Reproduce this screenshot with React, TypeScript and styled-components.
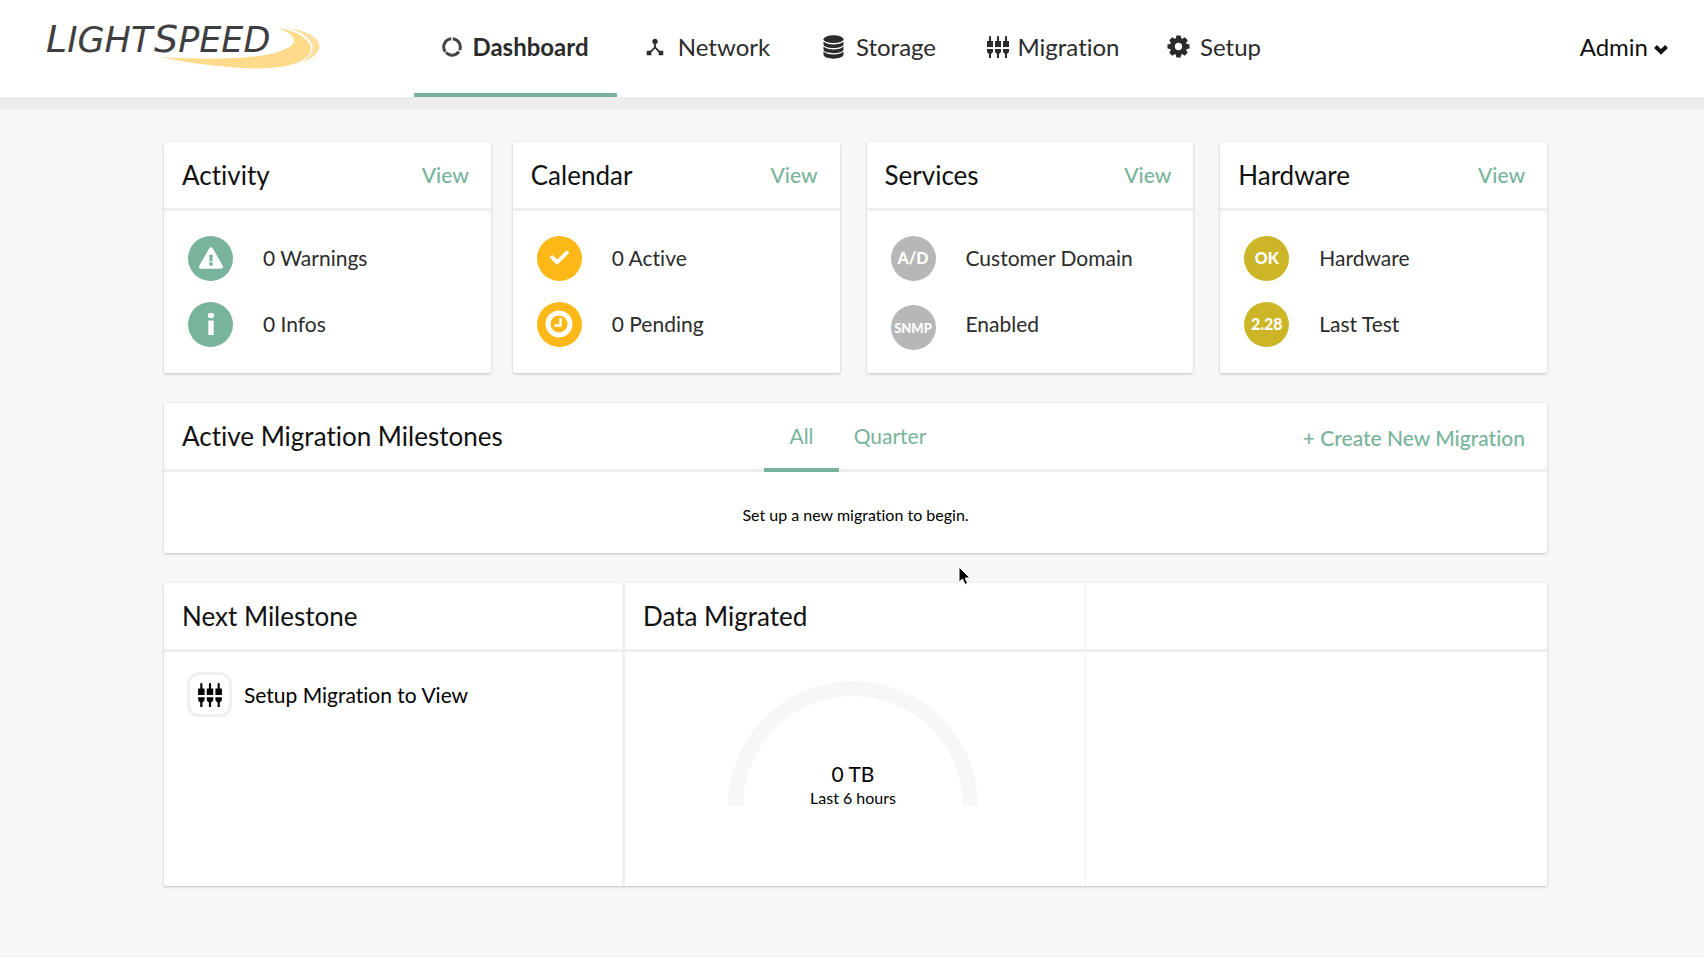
import React from 'react';
import styled, { createGlobalStyle } from 'styled-components';
import { MdDeviceHub, MdSettingsInputComponent } from 'react-icons/md';
import { FaExclamationTriangle, FaCheck } from 'react-icons/fa';

const green = '#78b39b';
const line = '#eeeeee';

const GlobalStyle = createGlobalStyle`
  * { box-sizing: border-box; }
  body {
    margin: 0;
    background: #fff;
    color: #111;
    font-family: Lato, "Open Sans", sans-serif;
    font-variant-ligatures: none;
  }
  h2, p, ul { margin: 0; padding: 0; }
  button { font: inherit; border: 0; background: none; padding: 0; cursor: pointer; }
  a { text-decoration: none; }
`;

const Page = styled.div`
  min-height: calc(100vh - 1px);
  background: #f7f7f7;
  border-bottom: 1px solid #ebebeb;
`;

const Header = styled.header`
  display: flex;
  align-items: stretch;
  height: 97px;
  padding: 0 36px 0 46px;
  background: #fff;
`;

const HeaderShade = styled.div`
  height: 13px;
  background: #ededed;
`;

const Brand = styled.a`
  display: block;
  width: 368px;
  padding-top: 10px;
`;

const Nav = styled.nav`
  display: flex;
  flex: 1;
`;

const NavLink = styled.a<{ $active?: boolean; $width: number; $gap: number }>`
  display: flex;
  align-items: center;
  justify-content: center;
  gap: ${(p) => p.$gap}px;
  width: ${(p) => p.$width}px;
  border-bottom: 4px solid ${(p) => (p.$active ? green : 'transparent')};
  color: #2b2b2b;
  font-size: 24px;
  line-height: 32px;
  font-weight: ${(p) => (p.$active ? 700 : 400)};
`;

const AdminButton = styled.button`
  display: flex;
  align-items: center;
  gap: 6px;
  padding-bottom: 4px;
  color: #111;
  font-size: 24px;
  line-height: 32px;

  svg { margin-top: 6px; }
`;

const Main = styled.main`
  display: flex;
  flex-direction: column;
  gap: 30px;
  padding: 32px 157px 68px 164px;
`;

const Panel = styled.section`
  background: #fff;
  border-radius: 2px;
  box-shadow: 0 1px 3px rgba(0, 0, 0, 0.22);
`;

const CardRow = styled.div`
  display: flex;
`;

const Card = styled(Panel)<{ $space: number }>`
  flex: 1;
  margin-left: ${(p) => p.$space}px;
`;

const PanelHead = styled.div`
  display: flex;
  align-items: center;
  justify-content: space-between;
  height: 69px;
  padding: 0 22px 0 18px;
  border-bottom: 3px solid ${line};
`;

const Title = styled.h2`
  font-size: 26px;
  line-height: 32px;
  font-weight: 400;
`;

const TextLink = styled.a`
  color: ${green};
  font-size: 21px;
  line-height: 28px;
  font-weight: 500;
`;

const StatusList = styled.ul`
  display: flex;
  flex-direction: column;
  gap: 15px;
  height: 162px;
  padding: 22px 24px;
  list-style: none;
`;

const StatusRow = styled.li`
  display: flex;
  align-items: center;
  gap: 30px;
  height: 51px;
  color: #2b2b2b;
  font-size: 21px;
  line-height: 28px;
`;

const StatusText = styled.span`
  padding-bottom: 1px;
`;

const Badge = styled.span<{ $color: string; $small?: boolean }>`
  display: flex;
  align-items: center;
  justify-content: center;
  align-self: ${(p) => (p.$small ? 'flex-end' : 'center')};
  flex: none;
  width: 45px;
  height: 45px;
  padding-bottom: ${(p) => (p.$small ? 0 : 2)}px;
  border-radius: 50%;
  background: ${(p) => p.$color};
  color: #fff;
  font-size: ${(p) => (p.$small ? 13 : 16)}px;
  line-height: 20px;
  font-weight: 900;
`;

const MilestoneHead = styled.div`
  display: grid;
  grid-template-columns: 600px 1fr auto;
  align-items: stretch;
  height: 69px;
  padding: 0 22px 0 0;
  box-shadow: inset 0 -3px ${line};

  h2 {
    align-self: center;
    padding: 0 0 4px 18px;
  }
  > a { align-self: center; }
`;

const Tabs = styled.div`
  display: flex;
`;

const Tab = styled.button<{ $active?: boolean; $width: number }>`
  width: ${(p) => p.$width}px;
  border-bottom: 4px solid ${(p) => (p.$active ? green : 'transparent')};
  color: ${green};
  font-size: 21px;
  line-height: 28px;
`;

const Message = styled.p`
  padding: 33px 0 28px;
  color: #000;
  text-align: center;
  font-size: 16px;
  line-height: 20px;
`;

const Summary = styled(Panel)`
  display: grid;
  grid-template-columns: repeat(3, 1fr);
  min-height: 303px;
`;

const SummaryColumn = styled.div<{ $divider?: string }>`
  border-right: ${(p) => p.$divider ?? '0'};
`;

const NextStep = styled.div`
  display: flex;
  align-items: center;
  gap: 12px;
  padding: 20px 23px;
  color: #000;
  font-size: 21px;
  line-height: 28px;
`;

const StepIcon = styled.span`
  display: flex;
  align-items: center;
  justify-content: center;
  width: 45px;
  height: 45px;
  border: 3px solid #f0eeee;
  border-radius: 12px;
`;

const Gauge = styled.div`
  display: grid;
  justify-items: center;
  padding: 29px 4px 0 0;
  color: #000;

  > * { grid-area: 1 / 1; }
`;

const GaugeLabel = styled.div`
  align-self: end;
  text-align: center;
`;

const GaugeValue = styled.p`
  font-size: 21px;
  line-height: 32px;
`;

const GaugeNote = styled.p`
  font-size: 16px;
  line-height: 16px;
`;

const Pointer = styled.svg`
  position: absolute;
  left: 958px;
  top: 566px;
`;

function Logo() {
  return (
    <svg width="280" height="64" viewBox="0 -10 280 64" role="img" aria-label="LightSpeed">
      <path d="M114 37C160 40 206 39 229 33C253 26 255 17 232 8C258 12 268 24 264 33C258 45 230 50 196 48C166 46 138 42 114 37Z" fill="#fddb8b" />
      <path d="M243 8C280 14 282 32 256 43C274 29 268 17 243 8Z" fill="#fddfa0" />
      <g fill="#3f3f41" fontFamily='"DejaVu Sans", sans-serif' fontStyle="oblique">
        <text x="0" y="32" fontSize="35"><tspan fontSize="38">L</tspan>IGHT</text>
        <text x="108" y="32" fontSize="35"><tspan fontSize="38">S</tspan>PEED</text>
      </g>
    </svg>
  );
}

function RingIcon() {
  return (
    <svg width="20" height="20" viewBox="0 0 20 20" fill="none" stroke="#454545" strokeWidth="3">
      <path d="M10.800 1.800A8.200 8.200 0 0 1 17.600 13.200M16.800 14.600A8.200 8.200 0 0 1 4 15.600M3.300 14.800A8.200 8.200 0 0 1 9.200 1.800" />
    </svg>
  );
}

function DatabaseIcon() {
  return (
    <svg width="21" height="24" viewBox="0 0 21 24" fill="#2b2b2b">
      <path d="M.5 16.500C4 20.500 17 20.500 20.500 16.500V19.500C20.500 25 .5 25 .5 19.500Z" />
      <path d="M.5 11.500C4 15.500 17 15.500 20.500 11.500V14.300C20.500 19.500 .5 19.500 .5 14.300Z" />
      <path d="M.5 6.500C4 10.500 17 10.500 20.500 6.500V9.200C20.500 14.300 .5 14.300 .5 9.200Z" />
      <ellipse cx="10.500" cy="4.200" rx="10" ry="3.900" />
    </svg>
  );
}

function GearIcon() {
  return (
    <svg width="23" height="23" viewBox="-12 -12 24 24" fill="#2b2b2b">
      {[0, 45, 90, 135, 180, 225, 270, 315].map((angle) => (
        <path key={angle} d="M-3.200 -7L-2.200 -11.500H2.200L3.200 -7Z" transform={`rotate(${angle})`} />
      ))}
      <circle r="6.300" fill="none" stroke="#2b2b2b" strokeWidth="5" />
    </svg>
  );
}

function ChevronIcon() {
  return (
    <svg width="14" height="11" viewBox="0 0 14 11" fill="none" stroke="#111" strokeWidth="4">
      <path d="M1.500 2.500L7 8L12.500 2.500" />
    </svg>
  );
}

function InfoIcon() {
  return (
    <svg width="8" height="24" viewBox="0 0 8 24" fill="#fff">
      <ellipse cx="4" cy="3.500" rx="3.200" ry="2.700" />
      <path d="M1.300 8.500H6.700V23H1.300Z" />
    </svg>
  );
}

function ClockIcon() {
  return (
    <svg width="28" height="28" viewBox="0 0 28 28" fill="none" stroke="#fff">
      <circle cx="14" cy="14" r="11" strokeWidth="5" />
      <path d="M15.500 8V15.500H9.500" strokeWidth="2.500" />
    </svg>
  );
}

const cards = [
  {
    title: 'Activity', space: 0, color: green,
    rows: [
      { badge: <FaExclamationTriangle size={24} />, text: '0 Warnings' },
      { badge: <InfoIcon />, text: '0 Infos' },
    ],
  },
  {
    title: 'Calendar', space: 22, color: '#fbb817',
    rows: [
      { badge: <FaCheck size={19} />, text: '0 Active' },
      { badge: <ClockIcon />, text: '0 Pending' },
    ],
  },
  {
    title: 'Services', space: 27, color: '#b7b7b7',
    rows: [
      { badge: 'A/D', text: 'Customer Domain' },
      { badge: 'SNMP', text: 'Enabled', small: true },
    ],
  },
  {
    title: 'Hardware', space: 27, color: '#ccb526',
    rows: [
      { badge: 'OK', text: 'Hardware' },
      { badge: '2.28', text: 'Last Test' },
    ],
  },
];

export default function App() {
  return (
    <Page>
      <GlobalStyle />
      <Header>
        <Brand href="#"><Logo /></Brand>
        <Nav>
          <NavLink href="#" $active $width={203} $gap={10}><RingIcon />Dashboard</NavLink>
          <NavLink href="#" $width={180} $gap={12}><MdDeviceHub size={22} />Network</NavLink>
          <NavLink href="#" $width={165} $gap={12}><DatabaseIcon />Storage</NavLink>
          <NavLink href="#" $width={182} $gap={7}><MdSettingsInputComponent size={24} />Migration</NavLink>
          <NavLink href="#" $width={140} $gap={10}><GearIcon />Setup</NavLink>
        </Nav>
        <AdminButton>Admin<ChevronIcon /></AdminButton>
      </Header>
      <HeaderShade />
      <Main>
        <CardRow>
          {cards.map((card) => (
            <Card key={card.title} $space={card.space}>
              <PanelHead>
                <Title>{card.title}</Title>
                <TextLink href="#">View</TextLink>
              </PanelHead>
              <StatusList>
                {card.rows.map((row) => (
                  <StatusRow key={row.text}>
                    <Badge $color={card.color} $small={'small' in row}>{row.badge}</Badge>
                    <StatusText>{row.text}</StatusText>
                  </StatusRow>
                ))}
              </StatusList>
            </Card>
          ))}
        </CardRow>
        <Panel>
          <MilestoneHead>
            <Title>Active Migration Milestones</Title>
            <Tabs>
              <Tab $active $width={75}>All</Tab>
              <Tab $width={102}>Quarter</Tab>
            </Tabs>
            <TextLink href="#">+ Create New Migration</TextLink>
          </MilestoneHead>
          <Message>Set up a new migration to begin.</Message>
        </Panel>
        <Summary>
          <SummaryColumn $divider="3px solid #f0eef2">
            <PanelHead><Title>Next Milestone</Title></PanelHead>
            <NextStep>
              <StepIcon><MdSettingsInputComponent size={26} /></StepIcon>
              Setup Migration to View
            </NextStep>
          </SummaryColumn>
          <SummaryColumn $divider="1px solid #f8eeee">
            <PanelHead><Title>Data Migrated</Title></PanelHead>
            <Gauge>
              <svg width="250" height="125" viewBox="0 0 250 125" fill="none">
                <path d="M7.500 125A117.500 117.500 0 0 1 242.500 125" stroke="#f7f7f7" strokeWidth="15" />
              </svg>
              <GaugeLabel>
                <GaugeValue>0 TB</GaugeValue>
                <GaugeNote>Last 6 hours</GaugeNote>
              </GaugeLabel>
            </Gauge>
          </SummaryColumn>
          <SummaryColumn>
            <PanelHead />
          </SummaryColumn>
        </Summary>
      </Main>
      <Pointer width="14" height="20" viewBox="0 0 14 20">
        <path d="M1 1V16L4.500 13L7 18.500L9.500 17.300L7.200 12H12Z" fill="#000" stroke="#fff" />
      </Pointer>
    </Page>
  );
}
